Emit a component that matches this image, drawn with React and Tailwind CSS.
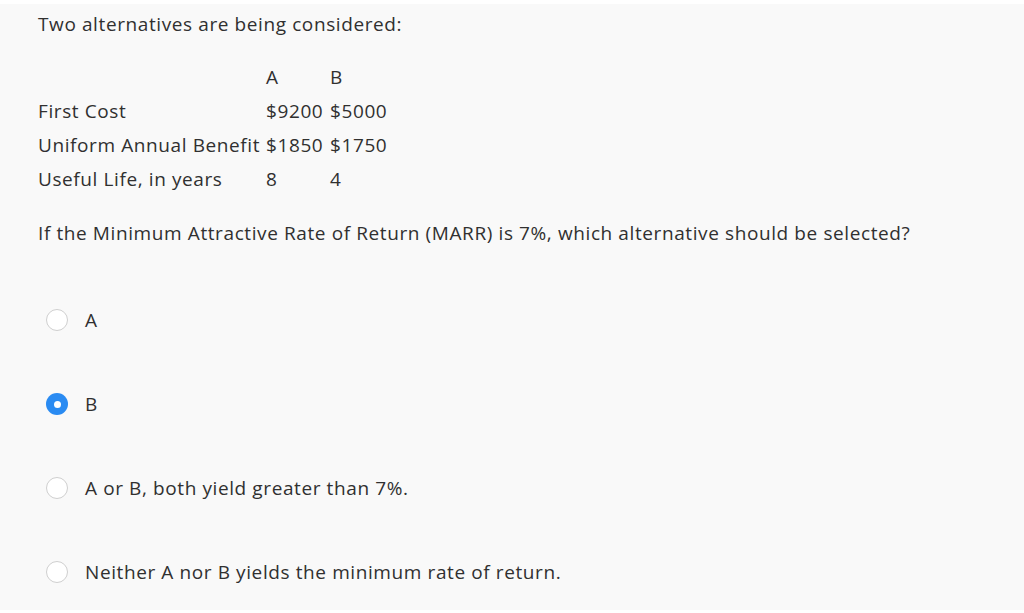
import React, { useState } from "react";

const options = [
  { id: "a", label: "A" },
  { id: "b", label: "B" },
  { id: "c", label: "A or B, both yield greater than 7%." },
  { id: "d", label: "Neither A nor B yields the minimum rate of return." },
];

const rows = [
  ["First Cost", "$9200", "$5000"],
  ["Uniform Annual Benefit", "$1850", "$1750"],
  ["Useful Life, in years", "8", "4"],
];

const Radio = ({ checked }) =>
  checked ? (
    <span className="w-[22px] h-[22px] rounded-full bg-[#2a8bf2] flex items-center justify-center shrink-0">
      <span className="w-[7px] h-[7px] rounded-full bg-white" />
    </span>
  ) : (
    <span className="w-[22px] h-[22px] rounded-full border border-[#cfcfcf] bg-white shrink-0" />
  );

const App = () => {
  const [selected, setSelected] = useState("b");

  return (
    <div className="w-[1024px] h-[613px] bg-white pt-[4px] pb-[3px] overflow-hidden font-['Open_Sans',sans-serif] text-[#303030] text-[19px] tracking-[0.6px]">
      <div className="h-full bg-[#f9f9f9] pl-[38px] pt-[9px]">
        <p className="leading-[22px]">Two alternatives are being considered:</p>

        <div className="mt-[25px] grid grid-cols-[228px_64px_auto] auto-rows-[34px] items-center leading-[22px] w-max">
          <span />
          <span>A</span>
          <span>B</span>
          {rows.map(([label, a, b]) => (
            <React.Fragment key={label}>
              <span>{label}</span>
              <span>{a}</span>
              <span>{b}</span>
            </React.Fragment>
          ))}
        </div>

        <p className="mt-[26px] leading-[22px]">
          If the Minimum Attractive Rate of Return (MARR) is 7%, which alternative should be selected?
        </p>

        <div className="mt-[65px] flex flex-col gap-[62px] pl-[8px]">
          {options.map((o) => (
            <label
              key={o.id}
              className="flex items-center gap-[17px] h-[22px] leading-[22px] cursor-pointer"
              onClick={() => setSelected(o.id)}
            >
              <Radio checked={selected === o.id} />
              <span>{o.label}</span>
            </label>
          ))}
        </div>
      </div>
    </div>
  );
};

export default App;
